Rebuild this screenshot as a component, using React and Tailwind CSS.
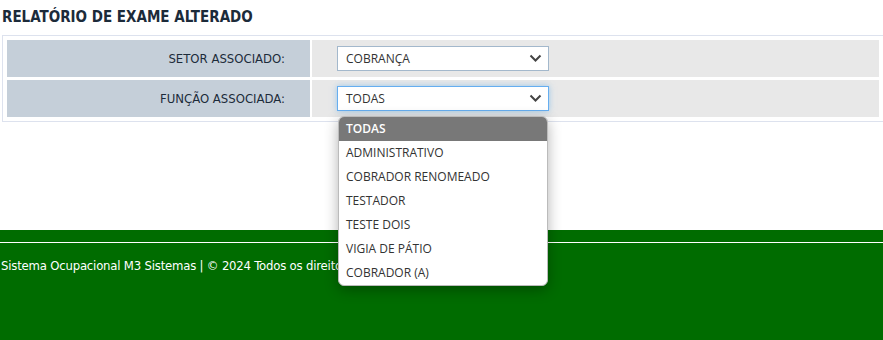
import React from "react";

function Chevron() {
  return (
    <svg width="13" height="9" viewBox="0 0 13 9" className="shrink-0">
      <path d="M1.5 1.5 L6.5 6.5 L11.5 1.5" fill="none" stroke="#444" strokeWidth="2" />
    </svg>
  );
}

function SelectBox({ value, focused }) {
  return (
    <div
      className={
        "flex h-[25px] w-[212px] items-center justify-between bg-white pl-[8px] pr-[6px] text-[12px] text-[#333] " +
        (focused
          ? "border border-[#66aef0] shadow-[0_0_6px_rgba(102,175,233,0.6)]"
          : "border border-[#a3b8cc]")
      }
      style={{ fontFamily: '"Open Sans", sans-serif' }}
    >
      <span>{value}</span>
      <Chevron />
    </div>
  );
}

const options = [
  "TODAS",
  "ADMINISTRATIVO",
  "COBRADOR RENOMEADO",
  "TESTADOR",
  "TESTE DOIS",
  "VIGIA DE PÁTIO",
  "COBRADOR (A)",
];

export default function App() {
  return (
    <div className="relative h-[340px] w-[883px] overflow-hidden bg-white">
      <div className="h-[230px]">
        <h1
          className="pl-[2px] pt-[7px] text-[15px] font-bold leading-[20px] text-[#1c2b3a]"
          style={{ fontFamily: '"DejaVu Sans Condensed", "DejaVu Sans", sans-serif' }}
        >
          RELATÓRIO DE EXAME ALTERADO
        </h1>
        <div className="ml-[2px] mt-[8px] border border-r-0 border-[#dde2ee] px-[4px] py-[4px]">
          <div className="flex flex-col gap-[3px]">
            <div className="flex h-[37px] gap-[2px]">
              <div
                className="flex w-[303px] items-center justify-end bg-[#c5cfd9] pr-[25px] text-[13px] text-[#1c2b3a]"
                style={{ fontFamily: '"DejaVu Sans Condensed", "DejaVu Sans", sans-serif' }}
              >
                SETOR ASSOCIADO:
              </div>
              <div className="flex flex-1 items-center bg-[#e8e8e8] pl-[25px]">
                <SelectBox value="COBRANÇA" />
              </div>
            </div>
            <div className="flex h-[37px] gap-[2px]">
              <div
                className="flex w-[303px] items-center justify-end bg-[#c5cfd9] pr-[25px] text-[13px] text-[#1c2b3a]"
                style={{ fontFamily: '"DejaVu Sans Condensed", "DejaVu Sans", sans-serif' }}
              >
                FUNÇÃO ASSOCIADA:
              </div>
              <div className="flex flex-1 items-center bg-[#e8e8e8] pl-[25px]">
                <SelectBox value="TODAS" focused />
              </div>
            </div>
          </div>
        </div>
      </div>
      <footer className="h-[110px] bg-[#006c00] pt-[12px]">
        <div className="h-px w-full bg-white" />
        <p
          className="pl-[1px] pt-[13px] text-[13px] tracking-[-0.2px] text-white"
          style={{ fontFamily: '"DejaVu Sans Condensed", "DejaVu Sans", sans-serif' }}
        >
          Sistema Ocupacional M3 Sistemas | © 2024 Todos os direitos reservados.
        </p>
      </footer>
      <div
        className="absolute left-[338px] top-[116px] w-[210px] overflow-hidden rounded-[6px] border border-[#bbb] bg-white shadow-[0_4px_14px_rgba(0,0,0,0.3)]"
        style={{ fontFamily: '"Open Sans", sans-serif' }}
      >
        {options.map((o, i) => (
          <div
            key={o}
            className={
              "flex h-[24px] items-center pl-[7px] text-[12px] " +
              (i === 0 ? "bg-[#787878] font-semibold text-white" : "text-[#333]")
            }
          >
            {o}
          </div>
        ))}
      </div>
    </div>
  );
}
